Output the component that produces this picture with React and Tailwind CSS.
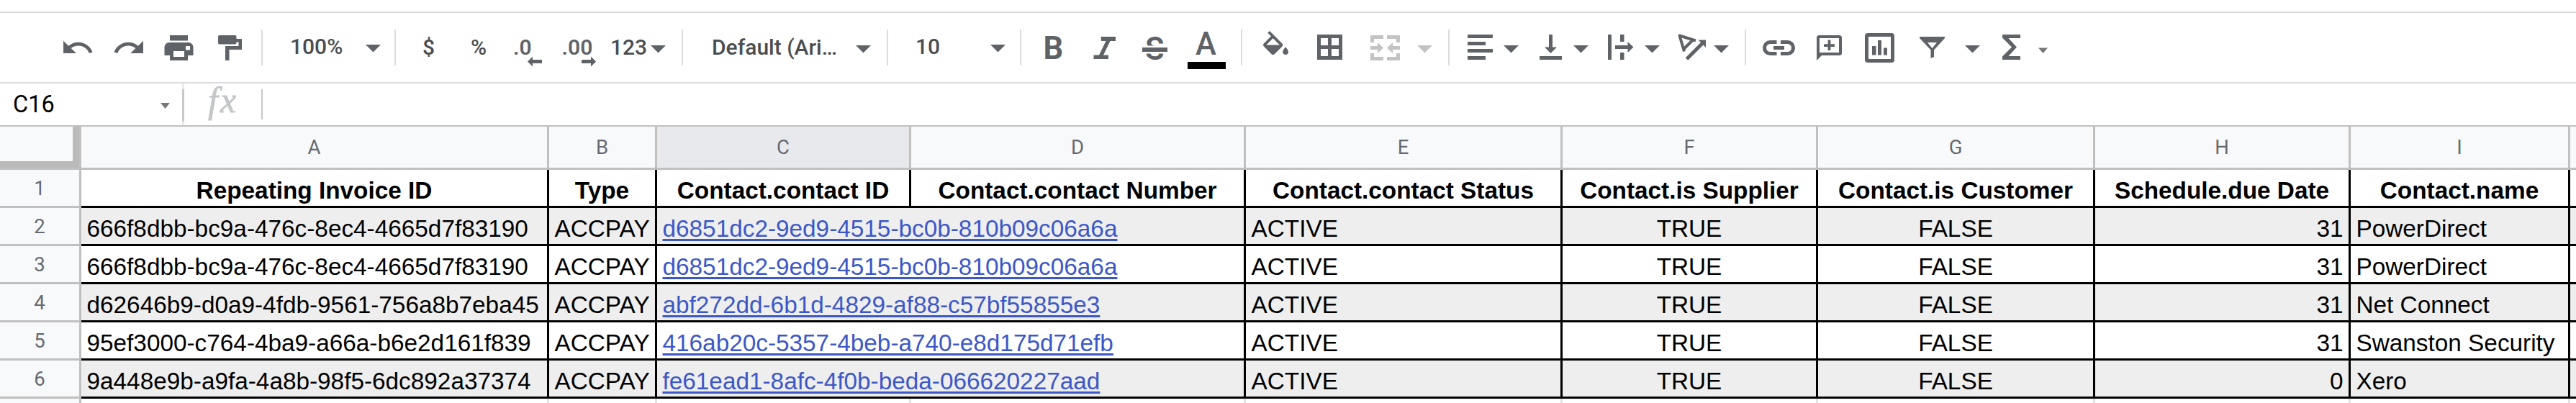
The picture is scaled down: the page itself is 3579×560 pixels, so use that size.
import React from "react";

const GREY = "#5f6368";

/* Toolbar drawings share one coordinate system: x runs along the toolbar, y from 18 to 114. */
function Glyph({ x, w, className, children }) {
  return (
    <svg viewBox={`${x} 18 ${w} 96`} fill={GREY} className={`h-24 shrink-0 ${className}`}>
      {children}
    </svg>
  );
}

function Caret({ className = "", up = false, light = false }) {
  return (
    <svg viewBox="0 0 21 96" className={`h-24 w-[21px] shrink-0 ${className}`} fill={light ? "#c1c3c5" : GREY}>
      <path d={up ? "M0 44H21L10.5 54.5Z" : "M0 45H21L10.5 55.5Z"} />
    </svg>
  );
}

function Sep({ className = "" }) {
  return <div className={`mt-[23px] h-[50px] w-[2px] shrink-0 bg-[#dadce0] ${className}`} />;
}

const label = "h-24 shrink-0 whitespace-nowrap text-[30px] leading-[96px] text-[#4a4d51]";

function Toolbar() {
  return (
    <div className="flex h-[100px] items-start border-y-2 border-[#dadce0] font-['Roboto',sans-serif]">
      <Glyph x={88} w={41} className="ml-[88px] w-[41px]">
        <path transform="translate(84.1 43.2) scale(1.98 1.93)" d="M12.5 8c-2.65 0-5.05.99-6.9 2.6L2 7v9h9l-3.62-3.62c1.39-1.16 3.16-1.88 5.12-1.88 3.54 0 6.55 2.31 7.6 5.5l2.37-.78C21.08 11.03 17.15 8 12.5 8z" />
      </Glyph>
      <Glyph x={158} w={41} className="ml-[29px] w-[41px]">
        <path transform="translate(203 43.2) scale(-1.98 1.93)" d="M12.5 8c-2.65 0-5.05.99-6.9 2.6L2 7v9h9l-3.62-3.62c1.39-1.16 3.16-1.88 5.12-1.88 3.54 0 6.55 2.31 7.6 5.5l2.37-.78C21.08 11.03 17.15 8 12.5 8z" />
      </Glyph>
      <Glyph x={228} w={41} className="ml-[29px] w-[41px]">
        <path d="M236 49h25v7.5h-25z" />
        <path fillRule="evenodd" d="M235 59h27a6.5 6.5 0 0 1 6.5 6.5V77H261v7h-25v-7h-7.500V65.500A6.500 6.500 0 0 1 235 59zM241 71v8h15v-8zM258 64v5.500h6V64z" />
      </Glyph>
      <Glyph x={303} w={33} className="ml-[34px] w-[33px]">
        <rect x="303" y="49" width="25.500" height="12.500" rx="2" />
        <path d="M328 54h8v15h-17.500v15h-5.500V64h18.500v-5.500H328z" />
      </Glyph>
      <Sep className="ml-[27px]" />
      <div className={`${label} ml-[38px] w-[105px] -mt-px font-medium`}>100%</div>
      <Caret up />
      <Sep className="ml-[19px]" />
      <div className={`${label} ml-[37px] w-[66px] font-medium`}>$</div>
      <div className={`${label} ml-px w-[60px] font-medium`}>%</div>
      <Glyph x={714} w={42} className="w-[42px]">
        <text x="713" y="76" fontSize="30" fontWeight="600">.0</text>
        <path d="M733 85.500l7-7v4.500h13v5h-13v4.500z" />
      </Glyph>
      <Glyph x={780} w={50} className="ml-6 w-[50px]">
        <text x="780.500" y="76" fontSize="30" fontWeight="600">.00</text>
        <path d="M828 85.500l-7-7v4.500h-13v5h13v4.500z" />
      </Glyph>
      <div className={`${label} ml-[18px] w-[56px] font-medium`}>123</div>
      <Caret />
      <Sep className="ml-[22px]" />
      <div className={`${label} ml-10 w-[200px] font-medium`}>Default (Ari…</div>
      <Caret />
      <Sep className="ml-[22px]" />
      <div className={`${label} ml-[38px] w-[104px] -mt-px font-medium`}>10</div>
      <Caret up />
      <Sep className="ml-5" />
      <Glyph x={1449} w={30} className="ml-[30px] w-[30px]">
        <text x="1449.500" y="82" fontSize="43.500" fontWeight="700">B</text>
      </Glyph>
      <Glyph x={1519} w={32} className="ml-10 w-8">
        <path d="M1529.500 51H1550v6h-7.500l-9.500 19.500h7V82h-20.500v-5.500h7.500l9.500-19.500h-6.500z" />
      </Glyph>
      <Glyph x={1587} w={35} className="ml-9 w-[35px]">
        <text x="1591" y="82.500" fontSize="43.500" fontWeight="600">S</text>
        <path d="M1587 63.500h35v11h-35z" fill="#fff" />
        <path d="M1587 66h35v6h-35z" />
      </Glyph>
      <Glyph x={1650} w={53} className="ml-7 w-[53px]">
        <text x="1661" y="76" fontSize="43.500" fontWeight="500">A</text>
        <path d="M1650 86h53v10h-53z" fill="#000" />
      </Glyph>
      <Sep className="ml-[21px]" />
      <Glyph x={1755} w={36} className="ml-[29px] w-9">
        <path transform="translate(1749.200 43) scale(1.944)" d="M16.56 8.94L7.62 0 6.21 1.41l2.38 2.38-5.15 5.15c-.59.59-.59 1.54 0 2.12l5.5 5.5c.29.29.68.44 1.06.44s.77-.15 1.06-.44l5.5-5.5c.59-.58.59-1.53 0-2.12zM5.21 10L10 5.21 14.79 10H5.21zM19 11.5s-2 2.17-2 3.5c0 1.1.9 2 2 2s2-.9 2-2c0-1.33-2-3.5-2-3.5z" />
      </Glyph>
      <Glyph x={1830} w={35} className="ml-[39px] w-[35px]">
        <path fillRule="evenodd" d="M1830 48h35v35h-35zM1835 53v10h10V53zM1850 53v10h10V53zM1835 68v10h10V68zM1850 68v10h10V68z" />
      </Glyph>
      <Glyph x={1904} w={41} className="ml-[39px] w-[41px]">
        <path fill="#c1c3c5" d="M1904 49h18v5h-13v5h-5zM1927 49h18v10h-5v-5h-13zM1904 74h5v5h13v5h-18zM1940 74h5v10h-18v-5h13zM1904 64h10v-5l8 7.500-8 7.500v-5h-10zM1945 64h-10v-5l-8 7.500 8 7.500v-5h10z" />
      </Glyph>
      <Caret light className="ml-6" />
      <Sep className="ml-[22px]" />
      <Glyph x={2039} w={35} className="ml-[25px] w-[35px]">
        <path d="M2039 48h35v5h-35zM2039 58h25v5h-25zM2039 68h35v5h-35zM2039 78h25v5h-25z" />
      </Glyph>
      <Caret className="ml-[15px]" />
      <Glyph x={2139} w={31} className="ml-[29px] w-[31px]">
        <path d="M2139 78h31v5h-31zM2152 48h5v17.500h6l-8.500 8.500-8.500-8.500h6z" />
      </Glyph>
      <Caret className="ml-4" />
      <Glyph x={2234} w={36} className="ml-[27px] w-9">
        <path d="M2234 48h5v35h-5zM2251 48h5.500v10h-5.500zM2251 73h5.500v10h-5.500zM2244 63h17.500v-5l8 7.500-8 7.500v-5H2244z" />
      </Glyph>
      <Caret className="ml-[15px]" />
      <Glyph x={2330} w={41} className="ml-[24px] w-[41px]">
        <path d="M2340 71.500L2333.500 49.500L2356 56.500M2340 67.500L2351.500 56" fill="none" stroke={GREY} strokeWidth="4" strokeLinejoin="round" />
        <path d="M2343.500 82L2366 59.500" stroke={GREY} strokeWidth="5" />
        <path d="M2370 55.500V66L2359.500 55.500z" />
      </Glyph>
      <Caret className="ml-[10px]" />
      <Sep className="ml-[22px]" />
      <Glyph x={2449} w={45} className="ml-[23px] w-[45px]">
        <path fill="none" stroke={GREY} strokeWidth="5" d="M2468.500 58.500h-9a8 8 0 0 0 0 16h9M2474 58.500h9.500a8 8 0 0 1 0 16H2474M2464 66.500h15" />
      </Glyph>
      <Glyph x={2524} w={35} className="ml-[30px] w-[35px]">
        <path fillRule="evenodd" d="M2527.500 49h28a3.500 3.500 0 0 1 3.500 3.500v21a3.500 3.500 0 0 1-3.500 3.500H2531l-7 7V52.500a3.500 3.500 0 0 1 3.500-3.500zM2528 53v20h27V53z" />
        <path d="M2534 61.200h15v3.700h-15zM2539.600 55.500h3.800v14.500h-3.800z" />
      </Glyph>
      <Glyph x={2591} w={41} className="ml-8 w-[41px]">
        <rect x="2593.500" y="48.500" width="36" height="36" rx="1.500" fill="none" stroke={GREY} strokeWidth="5" />
        <path d="M2601 64h5.500v12.500h-5.500zM2609 56h5v20.500h-5zM2617 66.500h5v10h-5z" />
      </Glyph>
      <Glyph x={2667} w={35} className="ml-[35px] w-[35px]">
        <path fillRule="evenodd" d="M2667 51h35v2l-15 16.500V79l-4.500 2V69.500L2667 53zM2678 59l6.500 8 6.500-8z" />
      </Glyph>
      <Caret className="ml-[28px]" />
      <Glyph x={2782} w={25} className="ml-[31px] w-[25px]">
        <path d="M2782 48h25v5h-16.500l11.500 12.500L2790.500 78H2807v5h-25v-4.500l13-13-13-13z" />
      </Glyph>
      <Glyph x={2832} w={13} className="ml-[25px] w-[13px]">
        <path fill="#777" d="M2832 66.500h13l-6.500 7.500z" />
      </Glyph>
    </div>
  );
}

function FormulaBar() {
  return (
    <div className="flex h-[60px] items-start border-b-2 border-[#c0c0c0]">
      <div className="ml-[18px] h-[58px] w-[205px] font-['Roboto',sans-serif] text-[32.5px] leading-[58px] text-black">C16</div>
      <svg viewBox="0 0 13 8" className="mt-[27px] h-2 w-[13px]" fill="#777">
        <path d="M0 0H13L6.500 8Z" />
      </svg>
      <div className="ml-[17px] flex h-[58px] w-[3px] items-start bg-[#ebebeb] pt-2">
        <div className="h-[45px] w-[3px] bg-[#c8c8c8]" />
      </div>
      <div className="ml-[33px] h-[58px] w-[74px] font-['Liberation_Serif',serif] text-[50px] leading-[46px] tracking-[3px] text-[#c4c6c8] italic [-webkit-text-stroke:0.8px_#c4c6c8]">fx</div>
      <div className="mt-2 h-[42px] w-[2px] bg-[#c8c8c8]" />
    </div>
  );
}

const COLS = "grid grid-cols-[113px_650px_150px_353px_465px_440px_355px_385px_355px_305px_8px]";

const rows = [
  ["666f8dbb-bc9a-476c-8ec4-4665d7f83190", "d6851dc2-9ed9-4515-bc0b-810b09c06a6a", "31", "PowerDirect"],
  ["666f8dbb-bc9a-476c-8ec4-4665d7f83190", "d6851dc2-9ed9-4515-bc0b-810b09c06a6a", "31", "PowerDirect"],
  ["d62646b9-d0a9-4fdb-9561-756a8b7eba45", "abf272dd-6b1d-4829-af88-c57bf55855e3", "31", "Net Connect"],
  ["95ef3000-c764-4ba9-a66a-b6e2d161f839", "416ab20c-5357-4beb-a740-e8d175d71efb", "31", "Swanston Security"],
  ["9a448e9b-a9fa-4a8b-98f5-6dc892a37374", "fe61ead1-8afc-4f0b-beda-066620227aad", "0", "Xero"],
];

const titles = [
  "Repeating Invoice ID",
  "Type",
  "Contact.contact ID",
  "Contact.contact Number",
  "Contact.contact Status",
  "Contact.is Supplier",
  "Contact.is Customer",
  "Schedule.due Date",
  "Contact.name",
];

function RowNumber({ n }) {
  return (
    <div className="h-[53px] border-r-[3px] border-b-[3px] border-[#c0c0c0] bg-[#f8f9fb] text-center font-['Roboto',sans-serif] text-[27.5px] leading-[51px] text-[#666a70]">
      {n}
    </div>
  );
}

function Cell({ className = "", children }) {
  return (
    <div className={`h-[53px] border-r-[3px] border-b-[3px] border-black px-[7.5px] leading-[57px] whitespace-nowrap ${className}`}>
      {children}
    </div>
  );
}

function Sheet() {
  return (
    <div className="font-['Liberation_Sans',Arial,sans-serif] text-[33.333px] text-black">
      <div className={COLS}>
        <div className="h-[60px] border-r-[3px] border-b-[3px] border-[#c0c0c0]">
          <div className="h-[57px] border-r-[9px] border-b-[9px] border-[#bababa] bg-[#f8f9fb]" />
        </div>
        {["A", "B", "C", "D", "E", "F", "G", "H", "I"].map((c) => (
          <div
            key={c}
            className={`h-[60px] border-r-[3px] border-b-[3px] border-[#c0c0c0] text-center font-['Roboto',sans-serif] text-[27.5px] leading-[57px] text-[#666a70] ${c === "C" ? "bg-[#e8e9ed]" : "bg-[#f8f9fb]"}`}
          >
            {c}
          </div>
        ))}
        <div className="border-b-[3px] border-[#c0c0c0] bg-[#f8f9fb]" />
      </div>
      <div className={COLS}>
        <RowNumber n={1} />
        {titles.map((t) => (
          <Cell key={t} className="text-center font-bold">{t}</Cell>
        ))}
        <div className="border-b-[3px] border-black" />
      </div>
      {rows.map(([id, contact, due, name], i) => (
        <div key={i} className={`${COLS} ${i % 2 === 0 ? "bg-[#eeeeee]" : "bg-white"}`}>
          <RowNumber n={i + 2} />
          <Cell>{id}</Cell>
          <Cell>ACCPAY</Cell>
          <Cell className="col-span-2">
            <span className="text-[#3c58c8] underline decoration-[3px] underline-offset-[3px] [text-decoration-skip-ink:none]">{contact}</span>
          </Cell>
          <Cell>ACTIVE</Cell>
          <Cell className="text-center">TRUE</Cell>
          <Cell className="text-center">FALSE</Cell>
          <Cell className="text-right">{due}</Cell>
          <Cell>{name}</Cell>
          <div className="border-b-[3px] border-black" />
        </div>
      ))}
      <div className={COLS}>
        <div className="h-[6px] border-r-[3px] border-[#c0c0c0] bg-[#f8f9fb]" />
        {titles.map((t) => (
          <div key={t} className="h-[6px] border-r-[3px] border-[#e2e3e3]" />
        ))}
      </div>
    </div>
  );
}

export default function App() {
  return (
    <div className="h-[560px] w-[3579px] overflow-hidden bg-white pt-4">
      <Toolbar />
      <FormulaBar />
      <Sheet />
    </div>
  );
}
